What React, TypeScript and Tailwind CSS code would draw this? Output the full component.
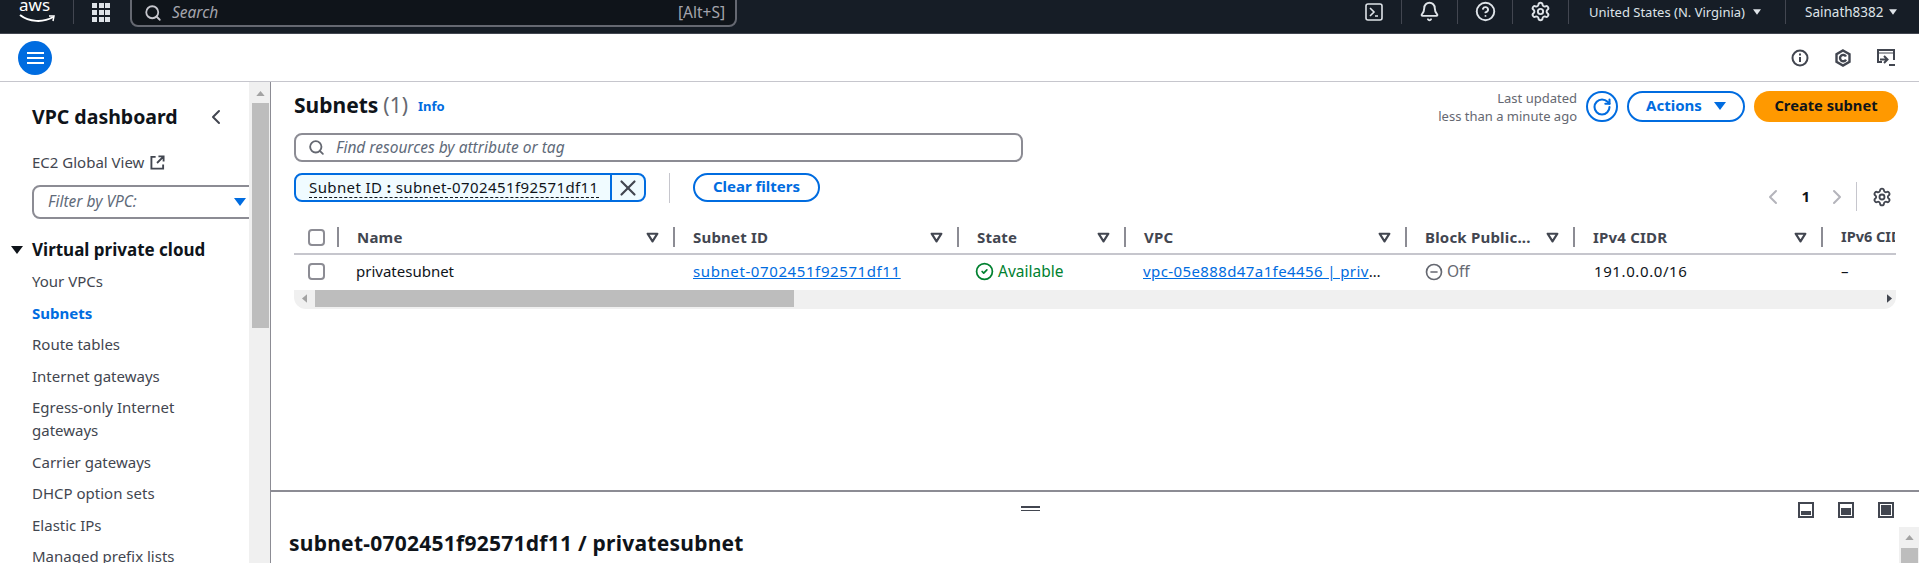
import { Search, Bell, CircleHelp, Settings, X, ChevronLeft, ChevronRight, RotateCw, CircleCheck, CircleMinus } from 'lucide-react'

const navItems = ['Your VPCs', 'Subnets', 'Route tables', 'Internet gateways', 'Egress-only Internet gateways', 'Carrier gateways', 'DHCP option sets', 'Elastic IPs', 'Managed prefix lists']

function Caret({ className }: { className: string }) {
  return (
    <svg viewBox="0 0 12 8" className={className} fill="currentColor">
      <path d="M0 0h12L6 8z" />
    </svg>
  )
}

function SortIcon() {
  return (
    <svg viewBox="0 0 12 10" className="w-[13px] h-[11px] text-[#424650]" fill="none" stroke="currentColor" strokeWidth="2">
      <path d="M1.5 1.5h9L6 8.500z" strokeLinejoin="round" />
    </svg>
  )
}

function Checkbox() {
  return <div className="w-[17px] h-[17px] rounded-[4px] border-2 border-[#8c8c94] bg-white" />
}

function TopBar() {
  return (
    <div className="h-[34px] shrink-0 flex items-start bg-[#161d26] border-b border-[#424650] text-[#dee3e8] overflow-hidden">
      <div className="w-[74px] h-[24px] relative border-r border-[#424650]">
        <span className="absolute left-[19px] top-[-7px] text-[17px] leading-[24px] text-white">aws</span>
        <svg viewBox="0 0 36 10" className="absolute left-[19px] top-[14px] w-[36px] h-[10px]" fill="none" stroke="white" strokeWidth="2">
          <path d="M1 1c9 7 23 8 33 2" />
          <path d="M30 2l5 0-1 5" strokeWidth="1.5" />
        </svg>
      </div>
      <div className="ml-[18px] mt-[3px] grid grid-cols-3 gap-[2px] w-[18px]">
        {Array.from({ length: 9 }).map((_, i) => (
          <div key={i} className="w-[5px] h-[5px] bg-[#dee3e8]" />
        ))}
      </div>
      <div className="ml-[20px] mt-[-8px] w-[607px] h-[35px] pt-[6px] rounded-[8px] border-2 border-[#656871] bg-[#0f141a] flex items-center pl-[12px] pr-[10px]">
        <Search className="w-[18px] h-[18px] text-[#c6c6cd]" strokeWidth={2.4} />
        <span className="ml-[10px] text-[15.5px] italic text-[#a4a4ad]">Search</span>
        <span className="ml-auto text-[15.5px] text-[#a4a4ad]">[Alt+S]</span>
      </div>
      <div className="ml-[628px] mr-[18px] w-[18px] pt-[3px]">
        <svg viewBox="0 0 18 18" className="w-[18px] h-[18px]" fill="none" stroke="currentColor" strokeWidth="1.6">
          <rect x="1" y="1" width="16" height="16" rx="2" />
          <path d="M5 5l4 4-4 4M10 13h3" />
        </svg>
      </div>
      <div className="w-[56px] h-[24px] flex justify-center pt-[1px] border-l border-[#424650]">
        <Bell className="w-[21px] h-[21px]" strokeWidth={2.2} />
      </div>
      <div className="w-[55px] h-[24px] flex justify-center pt-[1px] border-l border-[#424650]">
        <CircleHelp className="w-[21px] h-[21px]" strokeWidth={2.2} />
      </div>
      <div className="w-[56px] h-[24px] flex justify-center pt-[1px] border-l border-[#424650]">
        <Settings className="w-[21px] h-[21px]" strokeWidth={2.2} />
      </div>
      <div className="w-[217px] h-[24px] pl-[20px] flex items-center border-l border-[#424650] text-[13px] leading-[22px]">
        United States (N. Virginia)
        <Caret className="ml-[8px] w-[8px] h-[6px]" />
      </div>
      <div className="h-[24px] pl-[19px] flex items-center border-l border-[#424650] text-[13.5px] leading-[22px]">
        Sainath8382
        <Caret className="ml-[5px] w-[8px] h-[6px]" />
      </div>
    </div>
  )
}

function SubBar() {
  return (
    <div className="h-[48px] shrink-0 flex items-center bg-white border-b border-[#c6c6cd] pl-[18px] pr-[24px]">
      <div className="w-[34px] h-[34px] rounded-full bg-[#006ce0] flex flex-col items-center justify-center gap-[3px]">
        <div className="w-[17px] h-[2px] bg-white" />
        <div className="w-[17px] h-[2px] bg-white" />
        <div className="w-[17px] h-[2px] bg-white" />
      </div>
      <div className="ml-auto flex items-center gap-[25px] text-[#424650]">
        <svg viewBox="0 0 18 18" className="w-[18px] h-[18px]" fill="none" stroke="currentColor" strokeWidth="2">
          <circle cx="9" cy="9" r="7.5" />
          <path d="M9 8v5M9 4.5v2" />
        </svg>
        <svg viewBox="0 0 18 18" className="w-[18px] h-[18px]" fill="none" stroke="currentColor" strokeWidth="2.4">
          <path d="M9 1.5l6.5 3.7v7.6L9 16.5l-6.500-3.7V5.2z" />
          <path d="M12 7.5a3.2 3.2 0 1 0 0 3.2" />
        </svg>
        <svg viewBox="0 0 18 18" className="w-[18px] h-[18px]" fill="none" stroke="currentColor" strokeWidth="2">
          <path d="M5 13H1V1h16v10" />
          <path d="M1 4h16" strokeWidth="1" />
          <path d="M7 7l3.5 3.5L7 14M3 10.500h7M12 16h6" />
        </svg>
      </div>
    </div>
  )
}

function Sidebar() {
  return (
    <div className="w-[271px] shrink-0 flex border-r border-[#8c8c94] bg-white overflow-hidden">
      <div className="w-[249px] shrink-0 overflow-hidden">
        <div className="pl-[32px] pt-[22px] flex items-center">
          <span className="text-[19.5px] leading-[26px] font-bold text-[#0f141a]">VPC dashboard</span>
          <ChevronLeft className="ml-[26px] w-[24px] h-[24px] text-[#424650]" strokeWidth={2} />
        </div>
        <div className="pl-[32px] mt-[21px] flex items-center text-[15px] leading-[23px] text-[#424650]">
          EC2 Global View
          <svg viewBox="0 0 16 16" className="ml-[6px] w-[15px] h-[15px]" fill="none" stroke="currentColor" strokeWidth="2">
            <path d="M6 2H1.500v12.500H14V10M9 1.500h5.500V7M14 2L7.500 8.500" />
          </svg>
        </div>
        <div className="ml-[32px] mt-[11px] w-[240px] h-[34px] rounded-[8px] border-2 border-[#8c8c94] flex items-center pl-[14px]">
          <span className="text-[15.5px] italic text-[#5f6b7a]">Filter by VPC:</span>
          <Caret className="absolute ml-[186px] w-[12px] h-[8px] text-[#006ce0]" />
        </div>
        <div className="pl-[11px] mt-[19px] flex items-center">
          <Caret className="w-[12px] h-[8px] text-[#0f141a]" />
          <span className="ml-[9px] text-[17px] leading-[24px] font-bold text-[#0f141a]">Virtual private cloud</span>
        </div>
        <div className="pl-[32px] pr-[40px] mt-[8px] flex flex-col gap-[8.5px]">
          {navItems.map(item => (
            <div key={item} className={`text-[15px] leading-[23px] ${item === 'Subnets' ? 'font-bold text-[#006ce0]' : 'text-[#424650]'}`}>
              {item}
            </div>
          ))}
        </div>
      </div>
      <div className="w-[21px] shrink-0 bg-[#f0f0f0] flex flex-col items-center pl-[1px] pt-[9px]">
        <svg viewBox="0 0 10 6" className="w-[9px] h-[5px] text-[#a3a3a3]" fill="currentColor">
          <path d="M0 6h10L5 0z" />
        </svg>
        <div className="mt-[7px] w-[17px] h-[225px] bg-[#bdbdbd]" />
      </div>
    </div>
  )
}

const columns = [
  { label: 'Name', width: 'w-[336px]' },
  { label: 'Subnet ID', width: 'w-[284px]' },
  { label: 'State', width: 'w-[167px]' },
  { label: 'VPC', width: 'w-[281px]' },
  { label: 'Block Public...', width: 'w-[168px]' },
  { label: 'IPv4 CIDR', width: 'w-[248px]' },
]

function SubnetTable() {
  return (
    <div className="mt-[19px] w-[1602px] overflow-hidden">
      <div className="flex h-[34px] items-center border-b-2 border-[#c6c6cd]">
        <div className="w-[43px] shrink-0 flex items-center pl-[14px]">
          <Checkbox />
        </div>
        {columns.map(col => (
          <div key={col.label} className={`${col.width} shrink-0 h-[20px] pl-[18px] pr-[14px] flex items-center justify-between border-l-2 border-[#8c8c94]`}>
            <span className="text-[15px] tracking-[0.2px] font-bold text-[#424650]">{col.label}</span>
            <SortIcon />
          </div>
        ))}
        <div className="w-[74px] shrink-0 h-[20px] pl-[18px] border-l-2 border-[#8c8c94] flex items-center overflow-hidden whitespace-nowrap">
          <span className="text-[14.5px] font-bold text-[#424650]">IPv6 CIDR</span>
        </div>
      </div>
      <div className="flex h-[35px] pb-[2px] items-center text-[15px] text-[#0f141a]">
        <div className="w-[43px] shrink-0 pl-[14px]">
          <Checkbox />
        </div>
        <div className="w-[336px] shrink-0 pl-[19px]">privatesubnet</div>
        <div className="w-[284px] shrink-0 pl-[20px]">
          <span className="text-[#006ce0] underline tracking-[0.6px]">subnet-0702451f92571df11</span>
        </div>
        <div className="w-[167px] shrink-0 pl-[18px] flex items-center gap-[4px] text-[15.5px] text-[#00802f]">
          <CircleCheck className="w-[19px] h-[19px]" strokeWidth={2.2} />
          Available
        </div>
        <div className="w-[281px] shrink-0 pl-[19px] pr-[23px] truncate">
          <span className="text-[#006ce0] underline tracking-[0.4px]">vpc-05e888d47a1fe4456 | privatevpc</span>
        </div>
        <div className="w-[168px] shrink-0 pl-[20px] flex items-center gap-[4px] text-[15.5px] text-[#656871]">
          <CircleMinus className="w-[18px] h-[18px]" strokeWidth={2.2} />
          Off
        </div>
        <div className="w-[248px] shrink-0 pl-[21px] tracking-[0.6px]">191.0.0.0/16</div>
        <div className="w-[74px] shrink-0 pl-[20px]">–</div>
      </div>
      <div className="h-[19px] rounded-b-[12px] bg-[#f0f0f0] flex items-start">
        <div className="w-[20px] h-[17px] flex items-center justify-center">
          <svg viewBox="0 0 6 10" className="w-[5px] h-[9px] text-[#a3a3a3]" fill="currentColor">
            <path d="M6 0v10L0 5z" />
          </svg>
        </div>
        <div className="ml-[1px] w-[479px] h-[17px] bg-[#bdbdbd]" />
        <div className="ml-auto w-[14px] h-[17px] flex items-center justify-center">
          <svg viewBox="0 0 6 10" className="w-[5px] h-[9px] text-[#424650]" fill="currentColor">
            <path d="M0 0v10l6-5z" />
          </svg>
        </div>
      </div>
    </div>
  )
}

function SubnetsPanel() {
  return (
    <div className="flex-1 overflow-hidden pl-[23px] pr-[21px] pt-[9px]">
      <div className="flex h-[31px]">
        <div className="flex items-center pb-[2px]">
          <span className="text-[21px] font-bold text-[#0f141a]">Subnets</span>
          <span className="ml-[5px] text-[21px] text-[#656871]">(1)</span>
          <span className="ml-[10px] mt-[3px] text-[13px] font-bold text-[#006ce0]">Info</span>
        </div>
        <div className="ml-auto flex items-center">
          <div className="text-right text-[13px] leading-[18px] text-[#656871]">
            <div>Last updated</div>
            <div>less than a minute ago</div>
          </div>
          <div className="ml-[9px] w-[32px] h-[31px] rounded-full border-2 border-[#006ce0] flex items-center justify-center text-[#006ce0]">
            <RotateCw className="w-[20px] h-[20px]" strokeWidth={2.5} />
          </div>
          <div className="ml-[9px] w-[118px] h-[31px] pb-[2px] rounded-full border-2 border-[#006ce0] flex items-center justify-center gap-[12px] text-[15px] font-bold text-[#006ce0]">
            Actions
            <Caret className="w-[12px] h-[8px]" />
          </div>
          <div className="ml-[9px] w-[144px] h-[31px] pb-[2px] rounded-full bg-[#ff9900] flex items-center justify-center text-[14.7px] font-bold text-[#0f141a]">
            Create subnet
          </div>
        </div>
      </div>
      <div className="mt-[11px] w-[729px] h-[29px] rounded-[8px] border-2 border-[#8c8c94] flex items-center pl-[12px]">
        <Search className="w-[17px] h-[17px] text-[#656871]" strokeWidth={2.6} />
        <span className="ml-[11px] text-[15.5px] italic text-[#5f6b7a]">Find resources by attribute or tag</span>
      </div>
      <div className="mt-[11px] flex h-[29px]">
        <div className="w-[352px] h-full rounded-[8px] border-2 border-[#006ce0] bg-[#f0fbff] flex overflow-hidden">
          <div className="w-[316px] pl-[13px] flex items-center border-r-2 border-[#006ce0] text-[15px] tracking-[0.4px] text-[#0f141a]">
            <span className="border-b border-dashed border-[#0f141a] leading-[19px]">
              Subnet ID <span className="font-bold">:</span> subnet-0702451f92571df11
            </span>
          </div>
          <div className="flex-1 flex items-center justify-center">
            <X className="w-[26px] h-[26px] text-[#424650]" strokeWidth={2} />
          </div>
        </div>
        <div className="ml-[23px] w-px h-[30px] bg-[#c6c6cd]" />
        <div className="ml-[23px] w-[127px] h-full pb-[2px] rounded-full border-2 border-[#006ce0] flex items-center justify-center text-[15px] font-bold text-[#006ce0]">
          Clear filters
        </div>
        <div className="ml-auto flex items-center h-[47px]">
          <ChevronLeft className="w-[24px] h-[24px] text-[#b4b4bb]" strokeWidth={2} />
          <span className="ml-[16px] text-[15px] font-bold text-[#0f141a]">1</span>
          <ChevronRight className="ml-[15px] w-[24px] h-[24px] text-[#b4b4bb]" strokeWidth={2} />
          <div className="ml-[7px] w-px h-[29px] bg-[#c6c6cd]" />
          <Settings className="ml-[15px] mr-[6px] w-[20px] h-[20px] text-[#424650]" strokeWidth={2.2} />
        </div>
      </div>
      <SubnetTable />
    </div>
  )
}

function SplitIcon({ fill }: { fill: string }) {
  return (
    <div className="w-[16px] h-[16px] bg-[#424650] p-[2px]">
      <div className="w-full h-full bg-white flex flex-col justify-end p-[1px]">
        <div className={`${fill} bg-[#424650]`} />
      </div>
    </div>
  )
}

function DetailPanel() {
  return (
    <div className="h-[73px] shrink-0 border-t-2 border-[#8c8c94] flex flex-col">
      <div className="h-[35px] shrink-0 flex items-start pt-[10px]">
        <div className="ml-[750px] mt-[4px] w-[19px] flex flex-col gap-[2px]">
          <div className="h-[1.5px] bg-[#424650]" />
          <div className="h-[1.5px] bg-[#424650]" />
        </div>
        <div className="ml-auto mr-[25px] flex gap-[24px]">
          <SplitIcon fill="h-[4px]" />
          <SplitIcon fill="h-[7px]" />
          <SplitIcon fill="h-[10px]" />
        </div>
      </div>
      <div className="flex-1 flex overflow-hidden">
        <div className="flex-1 pl-[18px] pt-[2px] text-[21px] tracking-[0.25px] leading-[28px] font-bold text-[#0f141a]">
          subnet-0702451f92571df11 / privatesubnet
        </div>
        <div className="w-[20px] bg-[#f0f0f0] flex flex-col items-center pt-[8px]">
          <svg viewBox="0 0 10 6" className="w-[9px] h-[5px] text-[#a3a3a3]" fill="currentColor">
            <path d="M0 6h10L5 0z" />
          </svg>
          <div className="mt-[8px] w-[17px] flex-1 bg-[#bdbdbd]" />
        </div>
      </div>
    </div>
  )
}

export default function App() {
  return (
    <div className="w-full h-screen flex flex-col overflow-hidden bg-white font-['Noto_Sans','Open_Sans',sans-serif]">
      <TopBar />
      <SubBar />
      <div className="flex-1 flex overflow-hidden">
        <Sidebar />
        <div className="flex-1 min-w-0 flex flex-col">
          <SubnetsPanel />
          <DetailPanel />
        </div>
      </div>
    </div>
  )
}
